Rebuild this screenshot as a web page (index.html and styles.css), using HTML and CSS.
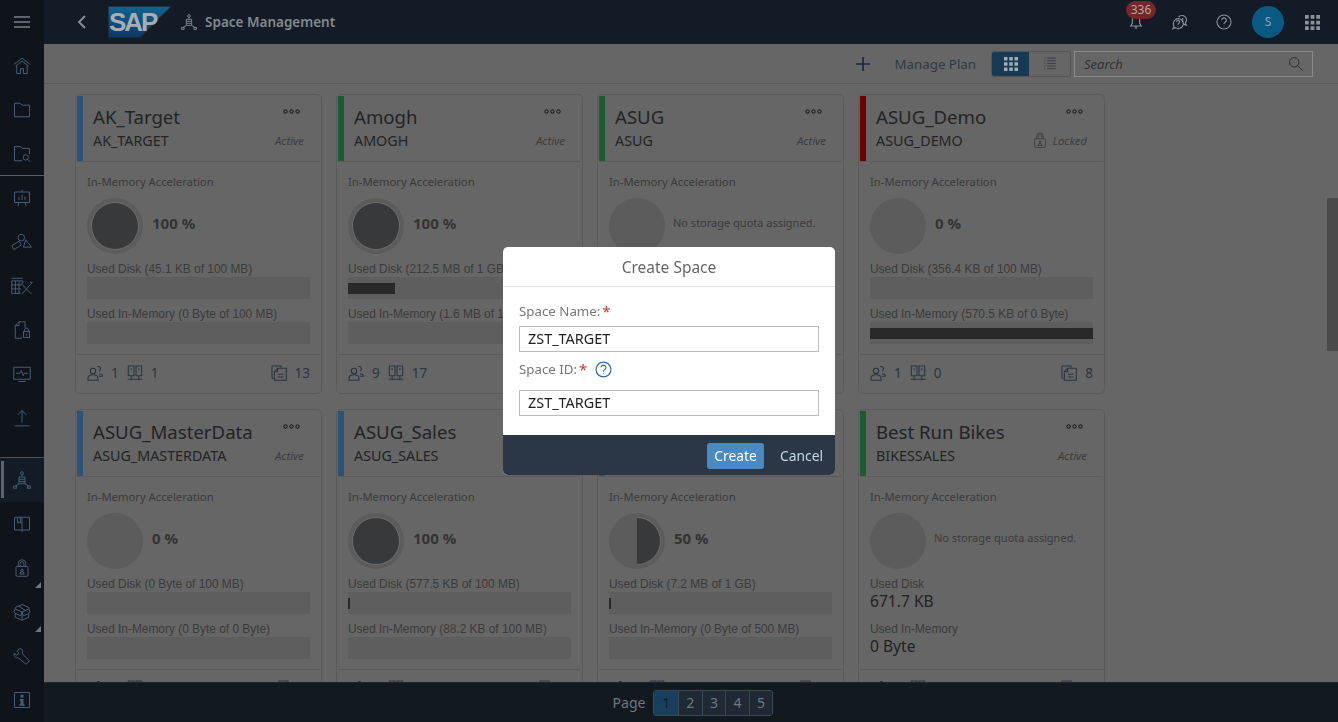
FILE: index.html
```html
<!DOCTYPE html>
<html lang="en">
<head>
  <meta charset="UTF-8" />
  <title>Space Management</title>
  <link rel="stylesheet" href="styles.css">
</head>
<body>
  <svg class="icon-defs" width="0" height="0">
    <defs>
      <symbol id="i-home" viewBox="0 0 24 24"><path d="M1 10 12 1.500 23 10M3.500 12 12 5.500 20.500 12M5 11.500V22H10V15.500H14V22H19V11.500"/></symbol>
      <symbol id="i-folder" viewBox="0 0 24 24"><path d="M2 3H10L12 5.500H22V21H2Z"/></symbol>
      <symbol id="i-folder-search" viewBox="0 0 24 24"><path d="M12 21H2V2H10L12 4.500H22V12"/><circle cx="17" cy="16.500" r="3.500"/><path d="M19.500 19 23 22.500"/></symbol>
      <symbol id="i-present" viewBox="0 0 24 24"><path d="M2 4H22V18H2ZM12 1V4M8 18 6.500 23M16 18 17.500 23M8 15V11M12 15V7.500M16 15V10"/></symbol>
      <symbol id="i-shapes" viewBox="0 0 30 24"><circle cx="14" cy="6" r="4.500"/><path d="M1 17 11 11 14 16 4 22.500ZM20 9 28 19H17Z"/></symbol>
      <symbol id="i-table-tool" viewBox="0 0 30 24"><path d="M1 1.500H16M1 5H16V8M1 5V22H13M1 10.500H14M1 16H13M6 5V22M11 5V22M14 9 28 23M29 7 15 23M14 9 17 7M26 7 29 7"/></symbol>
      <symbol id="i-doc-lock" viewBox="0 0 24 24"><path d="M8 1H16V9M8 1 3 6V23H12M3 6H8V1"/><rect x="14" y="14" width="8" height="8"/><path d="M15.500 14V12A2.500 2.500 0 0 1 20.500 12V14M18 17V19"/></symbol>
      <symbol id="i-monitor" viewBox="0 0 24 24"><path d="M1 3H23V19H1ZM7 22H17M4 11H9L11 7.500 13.500 14 15 11H20"/></symbol>
      <symbol id="i-upload" viewBox="0 0 24 24"><path d="M12 18V2M6.500 7.500 12 2 17.500 7.500M2 22.500H22"/></symbol>
      <symbol id="i-space" viewBox="0 0 24 24"><circle cx="12" cy="3" r="2"/><path d="M12 5V8M8 8H16V17H8ZM8 11H16M8 14H16M8 17 3.500 20M16 17 20.500 20"/><rect x="1" y="20" width="3.500" height="3"/><rect x="19.500" y="20" width="3.500" height="3"/></symbol>
      <symbol id="i-book" viewBox="0 0 24 24"><path d="M2 3H22V20H2ZM12 3V23M6 3V11L8 9 10 11V3"/></symbol>
      <symbol id="i-lock" viewBox="0 0 24 24"><rect x="4" y="10" width="16" height="13" rx="1.500"/><path d="M7 10V6A5 5 0 0 1 17 6V10M9.500 10V6A2.500 2.500 0 0 1 14.500 6V10"/><circle cx="12" cy="15" r="1.500"/><path d="M9 20 10.500 17H13.500L15 20Z"/></symbol>
      <symbol id="i-box" viewBox="0 0 24 24"><path d="M12 2 21 6V8L12 12 3 8V6ZM3 8 1 12 3 14V19L12 23 21 19V14L23 12 21 8M12 12V23M3 14 10 17 12 12M21 14 14 17 12 12M7.500 4 16.500 10"/></symbol>
      <symbol id="i-wrench" viewBox="0 0 24 24"><path d="M9 2 5.500 5.500 8 8.500 4.500 11 1.500 8C.5 12 3 15 7 14.500L17.500 23 22 18.500 12.500 9C13.500 5 12 2 9 2Z"/></symbol>
      <symbol id="i-info" viewBox="0 0 24 24"><path d="M2 2H22V22H2Z"/><path class="solid" d="M10 5H14V8.500H10ZM9 10.500H14V17.500H15.500V19.500H8.500V17.500H10V12.500H9Z"/></symbol>
      <symbol id="i-bell" viewBox="0 0 24 24"><path d="M12 2C7.500 2 6.500 6 6.500 9V14L4 18H20L17.500 14V9C17.500 6 16.500 2 12 2ZM10 21H14M12 18V21"/></symbol>
      <symbol id="i-chat" viewBox="0 0 24 24"><path d="M2 14A7.500 7.500 0 1 1 5 20.500L1.500 22 3 18.500C2.300 17.300 2 15.700 2 14Z"/><path d="M10 4.500A6.500 6.500 0 1 1 20 13.500L21.500 16.500 18 15.500"/><path d="M7 12A2.300 2.300 0 1 1 10 14C9.300 14.500 9 15 9 16M9 18V19M16 6V12M16 13.500V14"/></symbol>
      <symbol id="i-help" viewBox="0 0 24 24"><circle cx="12" cy="12" r="10.500"/><path d="M8.500 9A3.500 3.500 0 1 1 13.500 12.500C12.500 13 12 13.800 12 15M12 17.500V18.500"/></symbol>
      <symbol id="i-grid" viewBox="0 0 16 16"><path class="solid" d="M0 0H4V4H0ZM6 0H10V4H6ZM12 0H16V4H12ZM0 6H4V10H0ZM6 6H10V10H6ZM12 6H16V10H12ZM0 12H4V16H0ZM6 12H10V16H6ZM12 12H16V16H12Z"/></symbol>
      <symbol id="i-list" viewBox="0 0 24 24"><path d="M2 2H4M7 2H22M2 6.500H4M7 6.500H22M2 11H4M7 11H22M2 15.500H4M7 15.500H22M2 20H4M7 20H22"/></symbol>
      <symbol id="i-search" viewBox="0 0 24 24"><circle cx="10" cy="10" r="7.500"/><path d="M15.500 15.500 23 23"/></symbol>
      <symbol id="i-users" viewBox="0 0 24 24"><circle cx="9" cy="9" r="4"/><path d="M1.500 23V20C1.500 16.500 4.500 14.500 9 14.500S16.500 16.500 16.500 20V23ZM15 2.500A3.500 3.500 0 1 1 18 9M18 13C21 13 23 14.500 23 17H18"/></symbol>
      <symbol id="i-servers" viewBox="0 0 24 24"><path d="M2 1.500H10.500V16H2ZM13.500 1.500H22V16H13.500ZM6.200 5V8M17.800 5V8M1 21.500H23M6.200 16V23M17.800 16V23"/></symbol>
      <symbol id="i-docs" viewBox="0 0 24 24"><path d="M4 20H1.500V1.500H15V4"/><path d="M10 5H23V23H5V10ZM10 5V10H5M10 14H19M10 18H19"/></symbol>
      <symbol id="i-dots" viewBox="0 0 17 5"><circle cx="2.500" cy="2.500" r="1.700"/><circle cx="8.500" cy="2.500" r="1.700"/><circle cx="14.500" cy="2.500" r="1.700"/></symbol>
    </defs>
  </svg>

  <nav class="sidenav">
    <div class="nav-item"><svg class="nav-menu" viewBox="0 0 16 12"><path d="M0 1H16M0 6H16M0 11H16"/></svg></div>
    <div class="nav-item"><svg class="icon"><use href="#i-home"/></svg></div>
    <div class="nav-item"><svg class="icon"><use href="#i-folder"/></svg></div>
    <div class="nav-item nav-item-last"><svg class="icon"><use href="#i-folder-search"/></svg></div>
    <div class="nav-item"><svg class="icon"><use href="#i-present"/></svg></div>
    <div class="nav-item"><svg class="icon icon-wide"><use href="#i-shapes"/></svg></div>
    <div class="nav-item"><svg class="icon icon-wide"><use href="#i-table-tool"/></svg></div>
    <div class="nav-item"><svg class="icon"><use href="#i-doc-lock"/></svg></div>
    <div class="nav-item"><svg class="icon"><use href="#i-monitor"/></svg></div>
    <div class="nav-item"><svg class="icon"><use href="#i-upload"/></svg></div>
    <div class="nav-bottom">
      <div class="nav-item nav-selected"><svg class="icon"><use href="#i-space"/></svg></div>
      <div class="nav-item"><svg class="icon"><use href="#i-book"/></svg></div>
      <div class="nav-item nav-more"><svg class="icon"><use href="#i-lock"/></svg></div>
      <div class="nav-item nav-more"><svg class="icon"><use href="#i-box"/></svg></div>
      <div class="nav-item"><svg class="icon"><use href="#i-wrench"/></svg></div>
      <div class="nav-item"><svg class="icon"><use href="#i-info"/></svg></div>
    </div>
  </nav>

  <div class="main">
    <header class="shell">
      <svg class="back" viewBox="0 0 9 14"><path d="M8 1 2 7 8 13"/></svg>
      <svg class="logo" viewBox="0 0 64 32">
        <defs>
          <linearGradient id="logo-blue" x1="0" y1="0" x2="0" y2="1">
            <stop offset="0" stop-color="#0e6690"/>
            <stop offset="1" stop-color="#0b3766"/>
          </linearGradient>
        </defs>
        <path d="M0 0H64L32 32H0Z" fill="url(#logo-blue)"/>
        <text x="1" y="25" class="logo-text">SAP</text>
      </svg>
      <svg class="shell-app"><use href="#i-space"/></svg>
      <span class="shell-title">Space Management</span>
      <div class="shell-right">
        <div class="bell">
          <svg class="shell-icon"><use href="#i-bell"/></svg>
          <span class="badge">336</span>
        </div>
        <svg class="shell-icon"><use href="#i-chat"/></svg>
        <svg class="shell-icon"><use href="#i-help"/></svg>
        <span class="avatar">S</span>
        <svg class="shell-grid"><use href="#i-grid"/></svg>
      </div>
    </header>

    <div class="toolbar">
      <svg class="add" viewBox="0 0 14 14"><path d="M7 0V14M0 7H14"/></svg>
      <span class="manage">Manage Plan</span>
      <div class="toggle">
        <span class="toggle-btn toggle-on"><svg><use href="#i-grid"/></svg></span>
        <span class="toggle-btn"><svg><use href="#i-list"/></svg></span>
      </div>
      <div class="search">
        <span>Search</span>
        <svg><use href="#i-search"/></svg>
      </div>
    </div>

    <div class="content">
      <div class="cards">

        <article class="card">
          <div class="card-head">
            <span class="strip strip-blue"></span>
            <div class="head-text">
              <div class="card-title">AK_Target</div>
              <div class="card-id">AK_TARGET</div>
            </div>
            <div class="head-side">
              <svg class="dots"><use href="#i-dots"/></svg>
              <span class="state">Active</span>
            </div>
          </div>
          <div class="card-body">
            <div class="label lbl-accel">In-Memory Acceleration</div>
            <div class="accel">
              <div class="pie"><span class="pie-fill"></span></div>
              <span class="pct">100 %</span>
            </div>
            <div class="label">Used Disk (45.1 KB of 100 MB)</div>
            <div class="bar"></div>
            <div class="label">Used In-Memory (0 Byte of 100 MB)</div>
            <div class="bar"></div>
          </div>
          <div class="card-foot">
            <svg><use href="#i-users"/></svg><span>1</span>
            <svg><use href="#i-servers"/></svg><span>1</span>
            <svg class="foot-docs"><use href="#i-docs"/></svg><span>13</span>
          </div>
        </article>

        <article class="card">
          <div class="card-head">
            <span class="strip strip-green"></span>
            <div class="head-text">
              <div class="card-title">Amogh</div>
              <div class="card-id">AMOGH</div>
            </div>
            <div class="head-side">
              <svg class="dots"><use href="#i-dots"/></svg>
              <span class="state">Active</span>
            </div>
          </div>
          <div class="card-body">
            <div class="label lbl-accel">In-Memory Acceleration</div>
            <div class="accel">
              <div class="pie"><span class="pie-fill"></span></div>
              <span class="pct">100 %</span>
            </div>
            <div class="label">Used Disk (212.5 MB of 1 GB)</div>
            <div class="bar"><span class="bar-fill" style="width: 21%"></span></div>
            <div class="label">Used In-Memory (1.6 MB of 1 GB)</div>
            <div class="bar"></div>
          </div>
          <div class="card-foot">
            <svg><use href="#i-users"/></svg><span>9</span>
            <svg><use href="#i-servers"/></svg><span>17</span>
            <svg class="foot-docs"><use href="#i-docs"/></svg><span>20</span>
          </div>
        </article>

        <article class="card">
          <div class="card-head">
            <span class="strip strip-green"></span>
            <div class="head-text">
              <div class="card-title">ASUG</div>
              <div class="card-id">ASUG</div>
            </div>
            <div class="head-side">
              <svg class="dots"><use href="#i-dots"/></svg>
              <span class="state">Active</span>
            </div>
          </div>
          <div class="card-body">
            <div class="label lbl-accel">In-Memory Acceleration</div>
            <div class="accel">
              <div class="pie"></div>
              <span class="no-quota">No storage quota assigned.</span>
            </div>
            <div class="label">Used Disk</div>
            <div class="value">1.2 MB</div>
            <div class="label label-gap">Used In-Memory</div>
            <div class="value">0 Byte</div>
          </div>
          <div class="card-foot">
            <svg><use href="#i-users"/></svg><span>1</span>
            <svg><use href="#i-servers"/></svg><span>1</span>
            <svg class="foot-docs"><use href="#i-docs"/></svg><span>4</span>
          </div>
        </article>

        <article class="card">
          <div class="card-head">
            <span class="strip strip-red"></span>
            <div class="head-text">
              <div class="card-title">ASUG_Demo</div>
              <div class="card-id">ASUG_DEMO</div>
            </div>
            <div class="head-side">
              <svg class="dots"><use href="#i-dots"/></svg>
              <span class="state"><svg class="state-lock"><use href="#i-lock"/></svg>Locked</span>
            </div>
          </div>
          <div class="card-body">
            <div class="label lbl-accel">In-Memory Acceleration</div>
            <div class="accel">
              <div class="pie"></div>
              <span class="pct">0 %</span>
            </div>
            <div class="label">Used Disk (356.4 KB of 100 MB)</div>
            <div class="bar"></div>
            <div class="label">Used In-Memory (570.5 KB of 0 Byte)</div>
            <div class="bar"><span class="bar-fill" style="width: 100%"></span></div>
          </div>
          <div class="card-foot">
            <svg><use href="#i-users"/></svg><span>1</span>
            <svg><use href="#i-servers"/></svg><span>0</span>
            <svg class="foot-docs"><use href="#i-docs"/></svg><span>8</span>
          </div>
        </article>

        <article class="card">
          <div class="card-head">
            <span class="strip strip-blue"></span>
            <div class="head-text">
              <div class="card-title">ASUG_MasterData</div>
              <div class="card-id">ASUG_MASTERDATA</div>
            </div>
            <div class="head-side">
              <svg class="dots"><use href="#i-dots"/></svg>
              <span class="state">Active</span>
            </div>
          </div>
          <div class="card-body">
            <div class="label lbl-accel">In-Memory Acceleration</div>
            <div class="accel">
              <div class="pie"></div>
              <span class="pct">0 %</span>
            </div>
            <div class="label">Used Disk (0 Byte of 100 MB)</div>
            <div class="bar"></div>
            <div class="label">Used In-Memory (0 Byte of 0 Byte)</div>
            <div class="bar"></div>
          </div>
          <div class="card-foot">
            <svg><use href="#i-users"/></svg><span>1</span>
            <svg><use href="#i-servers"/></svg><span>1</span>
            <svg class="foot-docs"><use href="#i-docs"/></svg><span>2</span>
          </div>
        </article>

        <article class="card">
          <div class="card-head">
            <span class="strip strip-blue"></span>
            <div class="head-text">
              <div class="card-title">ASUG_Sales</div>
              <div class="card-id">ASUG_SALES</div>
            </div>
            <div class="head-side">
              <svg class="dots"><use href="#i-dots"/></svg>
              <span class="state">Active</span>
            </div>
          </div>
          <div class="card-body">
            <div class="label lbl-accel">In-Memory Acceleration</div>
            <div class="accel">
              <div class="pie"><span class="pie-fill"></span></div>
              <span class="pct">100 %</span>
            </div>
            <div class="label">Used Disk (577.5 KB of 100 MB)</div>
            <div class="bar"><span class="bar-fill" style="width: 1%"></span></div>
            <div class="label">Used In-Memory (88.2 KB of 100 MB)</div>
            <div class="bar"></div>
          </div>
          <div class="card-foot">
            <svg><use href="#i-users"/></svg><span>1</span>
            <svg><use href="#i-servers"/></svg><span>1</span>
            <svg class="foot-docs"><use href="#i-docs"/></svg><span>6</span>
          </div>
        </article>

        <article class="card">
          <div class="card-head">
            <span class="strip strip-blue"></span>
            <div class="head-text">
              <div class="card-title">ASUG_Test</div>
              <div class="card-id">ASUG_TEST</div>
            </div>
            <div class="head-side">
              <svg class="dots"><use href="#i-dots"/></svg>
              <span class="state">Active</span>
            </div>
          </div>
          <div class="card-body">
            <div class="label lbl-accel">In-Memory Acceleration</div>
            <div class="accel">
              <div class="pie"><span class="pie-fill pie-half"></span></div>
              <span class="pct">50 %</span>
            </div>
            <div class="label">Used Disk (7.2 MB of 1 GB)</div>
            <div class="bar"><span class="bar-fill" style="width: 1%"></span></div>
            <div class="label">Used In-Memory (0 Byte of 500 MB)</div>
            <div class="bar"></div>
          </div>
          <div class="card-foot">
            <svg><use href="#i-users"/></svg><span>1</span>
            <svg><use href="#i-servers"/></svg><span>1</span>
            <svg class="foot-docs"><use href="#i-docs"/></svg><span>3</span>
          </div>
        </article>

        <article class="card">
          <div class="card-head">
            <span class="strip strip-green"></span>
            <div class="head-text">
              <div class="card-title">Best Run Bikes</div>
              <div class="card-id">BIKESSALES</div>
            </div>
            <div class="head-side">
              <svg class="dots"><use href="#i-dots"/></svg>
              <span class="state">Active</span>
            </div>
          </div>
          <div class="card-body">
            <div class="label lbl-accel">In-Memory Acceleration</div>
            <div class="accel">
              <div class="pie"></div>
              <span class="no-quota">No storage quota assigned.</span>
            </div>
            <div class="label">Used Disk</div>
            <div class="value">671.7 KB</div>
            <div class="label label-gap">Used In-Memory</div>
            <div class="value">0 Byte</div>
          </div>
          <div class="card-foot">
            <svg><use href="#i-users"/></svg><span>1</span>
            <svg><use href="#i-servers"/></svg><span>1</span>
            <svg class="foot-docs"><use href="#i-docs"/></svg><span>5</span>
          </div>
        </article>

      </div>
      <div class="scroll-thumb"></div>
    </div>

    <footer class="pager">
      <span class="pager-label">Page</span>
      <div class="pager-btns">
        <span class="page page-on">1</span>
        <span class="page">2</span>
        <span class="page">3</span>
        <span class="page">4</span>
        <span class="page">5</span>
      </div>
    </footer>
  </div>

  <div class="dialog-layer">
    <div class="dialog">
      <div class="dialog-head">Create Space</div>
      <div class="dialog-body">
        <label class="field-label">Space Name:<span class="req">*</span></label>
        <div class="input">ZST_TARGET</div>
        <label class="field-label field-id">Space ID:<span class="req">*</span><svg class="field-help"><use href="#i-help"/></svg></label>
        <div class="input">ZST_TARGET</div>
      </div>
      <div class="dialog-foot">
        <button class="btn-create">Create</button>
        <button class="btn-cancel">Cancel</button>
      </div>
    </div>
  </div>
</body>
</html>
```

FILE: styles.css
```css
* {
  margin: 0;
  padding: 0;
  box-sizing: border-box;
}
body {
  display: flex;
  height: 100vh;
  overflow: hidden;
  background-color: #666;
  font-family: "Noto Sans", Arial, sans-serif;
  color: #222425;
}
svg {
  fill: none;
  stroke: currentColor;
  stroke-width: 1.3;
}
.solid {
  fill: currentColor;
  stroke: none;
}
.icon-defs {
  position: absolute;
}

/* Left navigation */
.sidenav {
  width: 44px;
  flex-shrink: 0;
  display: flex;
  flex-direction: column;
  background-color: #0e1419;
  color: #46607a;
}
.nav-item {
  height: 44px;
  flex-shrink: 0;
  display: flex;
  align-items: center;
  justify-content: center;
  position: relative;
}
.nav-item-last {
  border-bottom: 1px solid #5a5f63;
}
.nav-item .icon {
  width: 18px;
  height: 18px;
}
.nav-item .icon-wide {
  width: 22px;
}
.nav-menu {
  width: 16px;
  height: 12px;
  color: #74808b;
}
.nav-bottom {
  margin-top: auto;
  border-top: 1px solid #4a5158;
}
.nav-selected {
  background-color: #121b26;
}
.nav-selected::before {
  content: "";
  position: absolute;
  left: 1px;
  top: 3px;
  bottom: 4px;
  width: 3px;
  background-color: #5a6570;
}
.nav-more::after {
  content: "";
  position: absolute;
  right: 3px;
  bottom: 2px;
  border-left: 6px solid transparent;
  border-bottom: 6px solid #6e757b;
}

/* Shell bar */
.main {
  flex: 1;
  min-width: 0;
  display: flex;
  flex-direction: column;
}
.shell {
  height: 44px;
  flex-shrink: 0;
  display: flex;
  align-items: center;
  padding-left: 33px;
  background-color: #121b26;
}
.back {
  width: 9px;
  height: 14px;
  color: #8a929a;
  stroke-width: 1.8;
}
.logo {
  width: 64px;
  height: 32px;
  margin-left: 22px;
}
.logo-text {
  font-family: "Liberation Sans", Arial, sans-serif;
  font-size: 26px;
  font-weight: bold;
  letter-spacing: -2px;
  fill: #a9adb1;
  stroke: none;
}
.shell-app {
  width: 16px;
  height: 16px;
  margin-left: 9px;
  color: #8a8f94;
}
.shell-title {
  margin-left: 8px;
  font-size: 13.5px;
  font-weight: 600;
  color: #84898e;
}
.shell-right {
  margin-left: auto;
  display: flex;
  align-items: center;
  padding-right: 18px;
}
.shell-icon {
  width: 16px;
  height: 16px;
  color: #8a929a;
  margin-right: 28px;
  stroke-width: 1.7;
}
.bell {
  position: relative;
  display: flex;
}
.badge {
  position: absolute;
  left: -2px;
  top: -13px;
  width: 30px;
  height: 18px;
  border-radius: 9px;
  background-color: #742628;
  color: #b7a6a6;
  font-size: 12px;
  line-height: 18px;
  text-align: center;
}
.avatar {
  width: 32px;
  height: 32px;
  border-radius: 50%;
  background-color: #095a83;
  color: #89a7b9;
  font-size: 12px;
  line-height: 32px;
  text-align: center;
  margin-right: 21px;
  margin-left: -8px;
}
.shell-grid {
  width: 15px;
  height: 15px;
  color: #8a929a;
}

/* Toolbar */
.toolbar {
  height: 40px;
  flex-shrink: 0;
  display: flex;
  align-items: center;
  padding-right: 25px;
  justify-content: flex-end;
  border-bottom: 1px solid #5a5a5a;
}
.add {
  width: 14px;
  height: 14px;
  color: #16293d;
  stroke-width: 1.6;
}
.manage {
  margin-left: 25px;
  font-size: 13.3px;
  color: #2e3a48;
}
.toggle {
  display: flex;
  margin-left: 15px;
  height: 26px;
  border: 1px solid #555;
  border-radius: 3px;
  overflow: hidden;
}
.toggle-btn {
  width: 41px;
  display: flex;
  align-items: center;
  justify-content: center;
  color: #2a3038;
}
.toggle-btn svg {
  width: 14px;
  height: 14px;
}
.toggle-on {
  width: 37px;
  background-color: #173a54;
  color: #a3acb4;
}
.search {
  width: 239px;
  height: 26px;
  margin-left: 3px;
  border: 1px solid #8a8a8a;
  display: flex;
  align-items: center;
  justify-content: space-between;
  padding: 0 9px;
  font-size: 13px;
  font-style: italic;
  color: #333;
}
.search svg {
  width: 15px;
  height: 15px;
  color: #222;
}

/* Space cards */
.content {
  flex: 1;
  min-height: 0;
  overflow: hidden;
  position: relative;
  padding: 10px 0 0 31px;
}
.cards {
  display: grid;
  grid-template-columns: repeat(4, 247px);
  grid-auto-rows: 300px;
  column-gap: 14px;
  row-gap: 15px;
}
.card {
  border: 1px solid #5b5b5b;
  border-radius: 5px;
  padding: 1px;
  display: flex;
  flex-direction: column;
}
.card-head {
  height: 66px;
  flex-shrink: 0;
  display: flex;
  border-bottom: 1px solid #5b5b5b;
}
.strip {
  width: 6px;
  flex-shrink: 0;
}
.strip-blue {
  background-color: #2d5378;
}
.strip-green {
  background-color: #1b5c32;
}
.strip-red {
  background-color: #6e0000;
}
.head-text {
  margin-left: 10px;
  padding-top: 8px;
}
.card-title {
  font-size: 18.6px;
  line-height: 25px;
  white-space: nowrap;
}
.card-id {
  font-size: 14.3px;
  line-height: 20px;
  margin-top: 2px;
  white-space: nowrap;
}
.head-side {
  margin-left: auto;
  padding: 13px 16px 0 0;
  display: flex;
  flex-direction: column;
  align-items: flex-end;
}
.dots {
  width: 17px;
  height: 5px;
  margin-right: 4px;
  stroke-width: 1;
  color: #111;
}
.state {
  margin-top: 18px;
  height: 16px;
  display: flex;
  align-items: center;
  font-size: 11.3px;
  font-style: italic;
  color: #3d3d3d;
}
.state-lock {
  width: 16px;
  height: 16px;
  margin-right: 5px;
}
.card-body {
  flex: 1;
  padding: 0 10px;
}
.label {
  font-family: "Liberation Sans", Arial, sans-serif;
  font-size: 11.9px;
  line-height: 14px;
  color: #3b3b3b;
  margin-top: 1px;
  white-space: nowrap;
}
.lbl-accel {
  font-family: "Noto Sans", Arial, sans-serif;
  font-size: 11.25px;
  margin-top: 13px;
}
.label-gap {
  margin-top: 11px;
}
.accel {
  display: flex;
  align-items: flex-start;
  margin-top: 9px;
  margin-bottom: 8px;
}
.pie {
  width: 56px;
  height: 56px;
  flex-shrink: 0;
  border-radius: 50%;
  background-color: #5c5c5c;
  padding: 4px;
}
.pie-fill {
  display: block;
  width: 48px;
  height: 48px;
  border-radius: 50%;
  background-color: #37393b;
  border: 1px solid #6c6c6c;
}
.pie-half {
  clip-path: inset(0 0 0 50%);
}
.pct {
  margin: 15px 0 0 9px;
  font-size: 15px;
  font-weight: 700;
  color: #333;
}
.no-quota {
  margin: 17px 0 0 8px;
  font-size: 11px;
  color: #3b3b3b;
  white-space: nowrap;
}
.bar {
  height: 22px;
  margin: 1px 0 8px;
  background-color: #5e5e5e;
  display: flex;
  align-items: center;
}
.bar-fill {
  display: block;
  height: 11px;
  background-color: #27292b;
}
.value {
  font-size: 15.6px;
  line-height: 20px;
  color: #222;
}
.card-foot {
  height: 37px;
  flex-shrink: 0;
  margin-bottom: 1px;
  display: flex;
  align-items: center;
  padding: 0 10px;
  border-top: 1px solid #5b5b5b;
  font-size: 13.5px;
  color: #2a3542;
}
.card-foot svg {
  width: 16px;
  height: 16px;
  stroke-width: 1.6;
}
.card-foot span {
  margin: 0 8px;
}
.card-foot .foot-docs {
  margin-left: auto;
}
.card-foot span:last-child {
  margin-right: 0;
}
.scroll-thumb {
  position: absolute;
  right: 0;
  top: 114px;
  width: 11px;
  height: 153px;
  background-color: #4a4a4a;
}

/* Pagination */
.pager {
  height: 40px;
  flex-shrink: 0;
  display: flex;
  align-items: center;
  justify-content: center;
  padding-left: 4px;
  background-color: #12191f;
  border-top: 1px solid #1d2730;
  color: #6f7880;
  font-size: 14px;
}
.pager-label {
  margin-right: 8px;
}
.pager-btns {
  display: flex;
  border: 1px solid #3a4956;
  border-radius: 3px;
  overflow: hidden;
}
.page {
  width: 23.6px;
  height: 24px;
  line-height: 24px;
  text-align: center;
  background-color: #1f2933;
  border-left: 1px solid #3a4956;
}
.page:first-child {
  border-left: none;
}
.page-on {
  background-color: #1a3f5e;
  color: #0f1f2d;
}

/* Create Space dialog */
.dialog-layer {
  position: fixed;
  inset: 0;
  display: flex;
  align-items: center;
  justify-content: center;
}
.dialog {
  width: 332px;
  height: 228px;
  border-radius: 5px;
  overflow: hidden;
  background-color: #fff;
  display: flex;
  flex-direction: column;
}
.dialog-head {
  height: 40px;
  flex-shrink: 0;
  border-bottom: 1px solid #e5e5e5;
  font-size: 15.5px;
  line-height: 40px;
  text-align: center;
  color: #666;
}
.dialog-body {
  flex: 1;
  padding: 14px 16px 0;
}
.field-label {
  display: flex;
  align-items: center;
  height: 20px;
  margin-bottom: 5px;
  font-size: 13.3px;
  color: #777;
}
.req {
  color: #d0342c;
  margin-left: 2px;
  font-size: 15px;
}
.field-id {
  margin: 7px 0 11px;
}
.field-help {
  width: 17px;
  height: 17px;
  margin-left: 8px;
  color: #2b6aa5;
  stroke-width: 1.6;
}
.input {
  height: 26px;
  border: 1px solid #bbb;
  padding: 0 8px;
  font-size: 14.4px;
  line-height: 24px;
  color: #222;
}
.dialog-foot {
  height: 40px;
  flex-shrink: 0;
  display: flex;
  align-items: center;
  justify-content: flex-end;
  padding: 1px 12px 0 0;
  background-color: #2b3744;
}
.dialog-foot button {
  font-family: inherit;
  font-size: 13.8px;
  border: none;
  background: none;
  cursor: pointer;
}
.btn-create {
  width: 57px;
  height: 26px;
  border-radius: 3px;
}
.dialog-foot .btn-create {
  background-color: #4a8ac4;
  color: #fff;
}
.dialog-foot .btn-cancel {
  margin-left: 16px;
  color: #c5d8e8;
}
```
